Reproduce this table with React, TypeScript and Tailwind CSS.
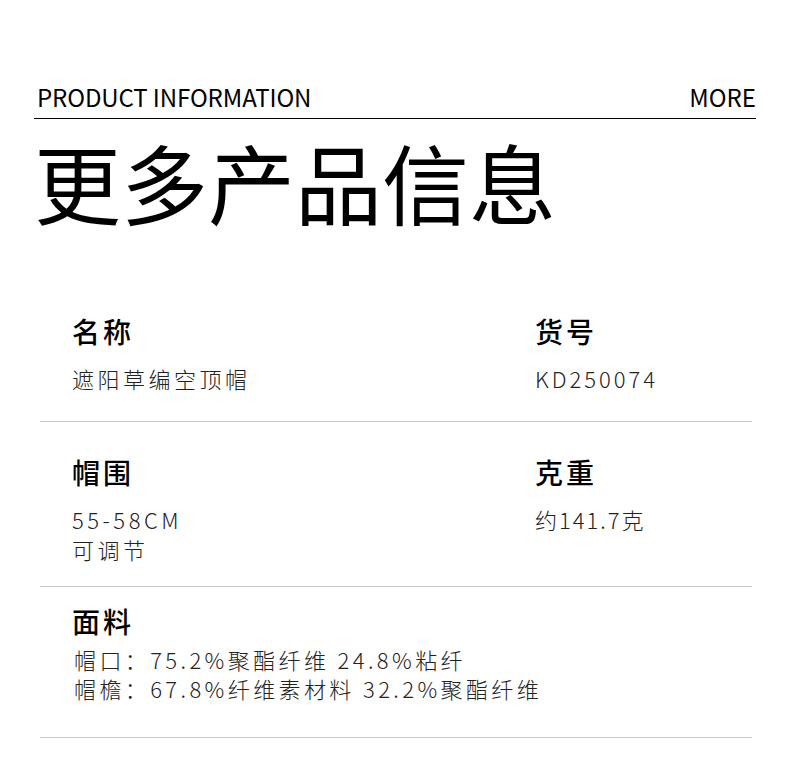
import React from "react";

const cjk = { fontFamily: '"Noto Sans CJK SC", "Noto Sans", sans-serif' };

export default function App() {
  return (
    <div className="w-[790px] h-[768px] bg-white text-black overflow-hidden" style={cjk}>
      <div className="mx-[34px] pt-[80px]">
        <div className="flex justify-between items-end border-b border-black pl-[3px] pr-[0px] pb-[4px]">
          <span className="text-[24px] leading-[34px] tracking-[-0.1px]">PRODUCT INFORMATION</span>
          <span className="text-[24px] leading-[34px]">MORE</span>
        </div>
        <div className="text-[87px] leading-[100px] mt-[12px] font-normal">更多产品信息</div>
      </div>

      <div className="mx-[40px] mt-[82px] w-[712px]">
        <div className="grid grid-cols-[463px_1fr] border-b border-[#c8c8c8] pb-[28px] pl-[32px]">
          <div>
            <div className="text-[28px] leading-[36px] font-medium tracking-[3px]">名称</div>
            <div className="mt-[14px] text-[22px] leading-[30px] font-light text-[#222] tracking-[3.5px]">遮阳草编空顶帽</div>
          </div>
          <div>
            <div className="text-[28px] leading-[36px] font-medium tracking-[3px]">货号</div>
            <div className="mt-[14px] text-[22px] leading-[30px] font-light text-[#222] tracking-[3px]">KD250074</div>
          </div>
        </div>

        <div className="grid grid-cols-[463px_1fr] border-b border-[#c8c8c8] pt-[32px] pb-[22px] pl-[32px]">
          <div>
            <div className="text-[28px] leading-[36px] font-medium tracking-[3px]">帽围</div>
            <div className="mt-[14px] text-[22px] leading-[30px] font-light text-[#222] tracking-[3.5px]">
              55-58CM
              <br />
              可调节
            </div>
          </div>
          <div>
            <div className="text-[28px] leading-[36px] font-medium tracking-[3px]">克重</div>
            <div className="mt-[14px] text-[22px] leading-[30px] font-light text-[#222] tracking-[2px]">约141.7克</div>
          </div>
        </div>

        <div className="border-b border-[#c8c8c8] pt-[16px] pb-[34px] pl-[32px]">
          <div className="text-[28px] leading-[36px] font-medium tracking-[3px]">面料</div>
          <div className="mt-[6px] ml-[2px] text-[22px] leading-[29px] font-light text-[#222] tracking-[3.4px]">
            帽口：75.2%聚酯纤维 24.8%粘纤
            <br />
            帽檐：67.8%纤维素材料 32.2%聚酯纤维
          </div>
        </div>
      </div>
    </div>
  );
}
